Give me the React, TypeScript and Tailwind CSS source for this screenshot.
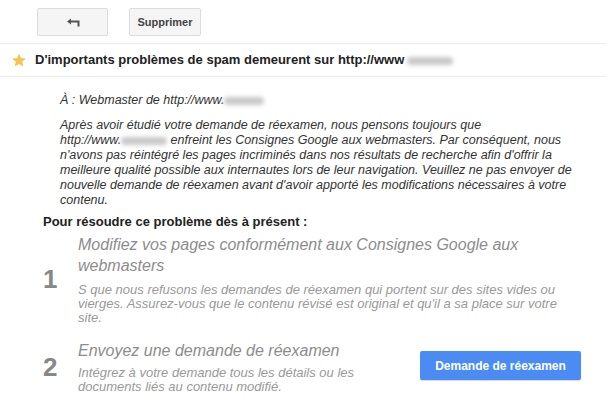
import React from "react";

const Blur = ({ w }: { w: number }) => (
  <span
    className="inline-block h-[8px] rounded-sm bg-[#c8c8c8] blur-[2px] align-middle"
    style={{ width: w }}
  />
);

const BackIcon = () => (
  <svg width="14" height="9" viewBox="0 0 14 9" fill="none">
    <path d="M1 3.5 L5 0.5 V6.5 Z" fill="#555" />
    <path d="M4 3.5 H12.5 V8.5" stroke="#555" strokeWidth="2" />
  </svg>
);

const Star = () => (
  <svg width="14" height="13" viewBox="0 0 24 23">
    <path
      d="M12 1 L15.1 8 L22.6 8.6 L16.9 13.5 L18.6 21 L12 17 L5.4 21 L7.1 13.5 L1.4 8.6 L8.9 8 Z"
      fill="#f5c64a"
      stroke="#e6b23a"
      strokeWidth="1"
    />
  </svg>
);

export default function App() {
  return (
    <div className="h-[405px] w-[606px] overflow-hidden bg-white font-['Liberation_Sans',Arial,sans-serif] text-[#222]">
      {/* toolbar */}
      <div className="flex h-[43px] items-start gap-[21px] pl-[37px] pt-[8px]">
        <button className="flex h-[28px] w-[71px] items-center justify-center rounded-[2px] border border-[#dcdcdc] bg-[#f5f5f5]">
          <BackIcon />
        </button>
        <button className="flex h-[28px] w-[72px] items-center justify-center rounded-[2px] border border-[#dcdcdc] bg-[#f5f5f5] text-[11px] font-bold text-[#444]">
          Supprimer
        </button>
      </div>

      {/* subject */}
      <div className="flex h-[34px] items-center gap-[9px] border-y border-[#ececec] pl-[12px]">
        <Star />
        <span className="whitespace-nowrap text-[13px] font-bold text-[#222]">
          D'importants problèmes de spam demeurent sur http://www
          <span className="ml-[3px]">
            <Blur w={46} />
          </span>
        </span>
      </div>

      {/* message */}
      <div className="pl-[60px] pt-[16px] text-[12.5px] italic leading-[15px] text-[#333]">
        <p className="whitespace-nowrap">
          À : Webmaster de http://www.
          <Blur w={40} />
        </p>
        <p className="mt-[10px] whitespace-nowrap">
          Après avoir étudié votre demande de réexamen, nous pensons toujours que
          <br />
          http://www.
          <Blur w={46} /> enfreint les Consignes Google aux webmasters. Par conséquent, nous
          <br />
          n'avons pas réintégré les pages incriminés dans nos résultats de recherche afin d'offrir la
          <br />
          meilleure qualité possible aux internautes lors de leur navigation. Veuillez ne pas envoyer de
          <br />
          nouvelle demande de réexamen avant d'avoir apporté les modifications nécessaires à votre
          <br />
          contenu.
        </p>
      </div>

      <div className="pl-[43px] pt-[6px]">
        <p className="text-[13px] font-bold leading-[16px] text-[#222]">
          Pour résoudre ce problème dès à présent :
        </p>

        {/* step 1 */}
        <div className="mt-[4px] flex items-center">
          <div className="w-[35px] text-[26px] font-bold text-[#888]">1</div>
          <div className="whitespace-nowrap italic text-[#999]">
            <p className="text-[16px] leading-[21px] text-[#8c8c8c]">
              Modifiez vos pages conformément aux Consignes Google aux
              <br />
              webmasters
            </p>
            <p className="mt-[7px] text-[13px] leading-[14px]">
              S que nous refusons les demandes de réexamen qui portent sur des sites vides ou
              <br />
              vierges. Assurez-vous que le contenu révisé est original et qu'il a sa place sur votre
              <br />
              site.
            </p>
          </div>
        </div>

        {/* step 2 */}
        <div className="mt-[15px] flex items-start">
          <div className="w-[35px] self-center text-[26px] font-bold text-[#888]">2</div>
          <div className="w-[342px] whitespace-nowrap italic text-[#999]">
            <p className="text-[16px] leading-[21px] text-[#8c8c8c]">
              Envoyez une demande de réexamen
            </p>
            <p className="mt-[5px] text-[13px] leading-[14px]">
              Intégrez à votre demande tous les détails ou les
              <br />
              documents liés au contenu modifié.
            </p>
          </div>
          <button className="mt-[11px] h-[29px] w-[161px] rounded-[2px] bg-[#4b8bf4] text-[12px] font-bold text-white shadow-[0_1px_1px_rgba(0,0,0,0.15)]">
            Demande de réexamen
          </button>
        </div>
      </div>
    </div>
  );
}
